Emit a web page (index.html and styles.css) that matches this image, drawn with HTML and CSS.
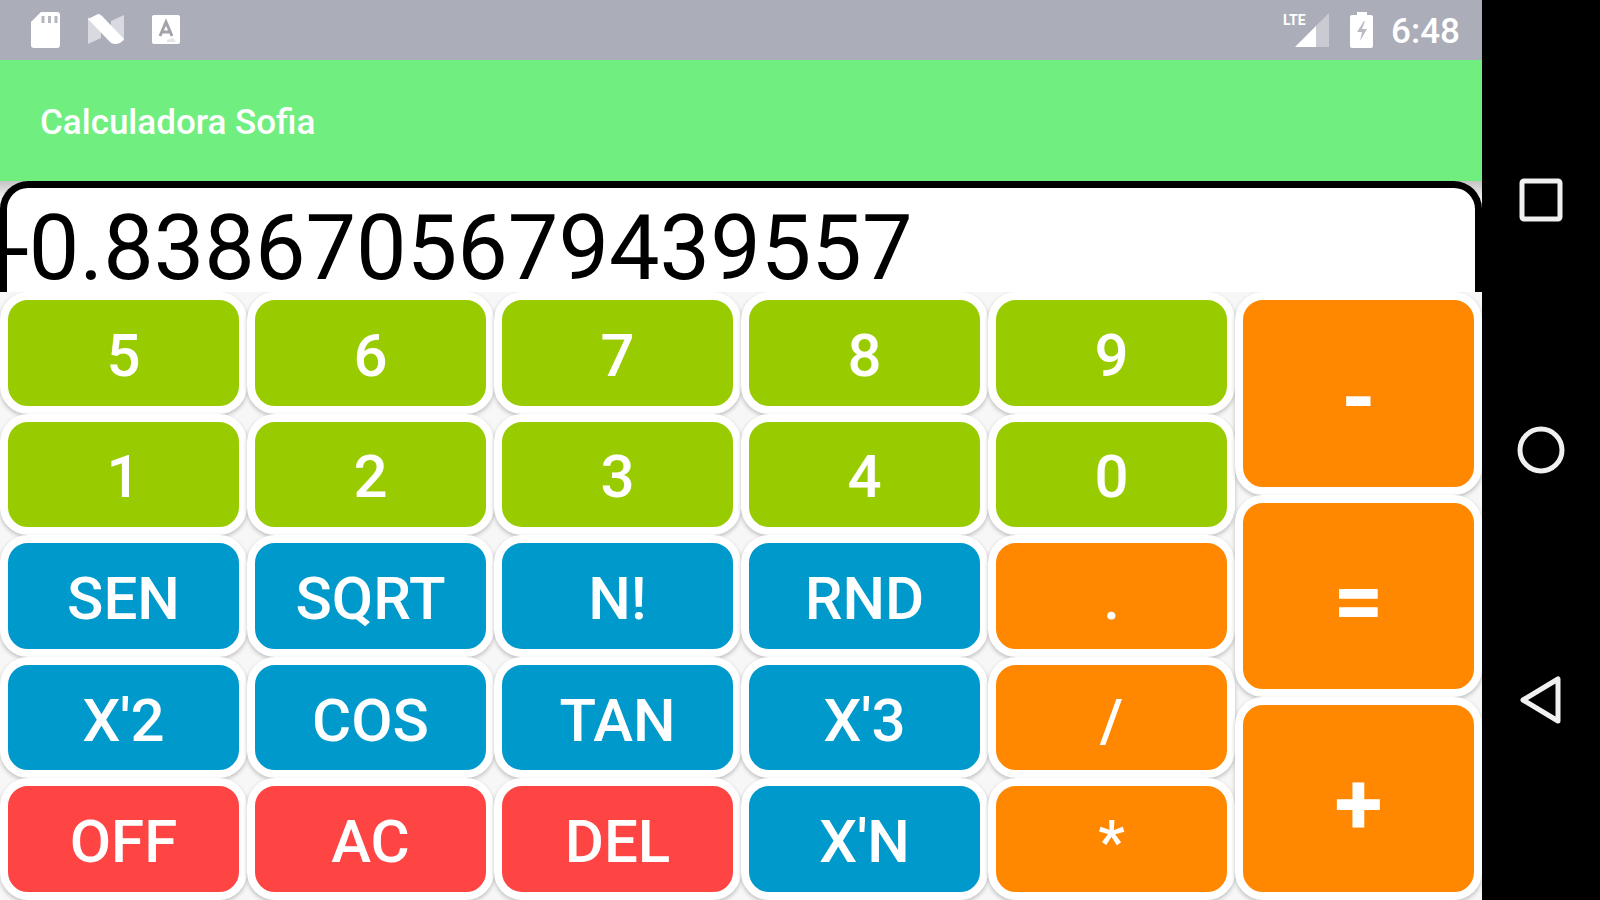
FILE: index.html
```html
<!DOCTYPE html>
<html lang="es">
<head>
<meta charset="utf-8">
<meta name="viewport" content="width=device-width, initial-scale=1">
<title>Calculadora Sofia</title>
<link rel="stylesheet" href="styles.css">
</head>
<body>
<div class="device">
  <div class="app">
    <div class="status">
      <div class="status-left">
        <svg class="status-icon" viewBox="0 0 36 36" aria-hidden="true">
          <path d="M13 0h16q3 0 3 3v30q0 3-3 3H6q-3 0-3-3V10z" fill="#fff"/>
          <path d="M15 4v7M21.500 4v7M28 4v7" stroke="#b5b6c0" stroke-width="3"/>
        </svg>
        <svg class="status-icon" viewBox="0 0 36 36" aria-hidden="true">
          <path d="M0 5l13 14v7L0 32zM36 3v26L23 17V9z" fill="#d9dae1"/>
          <path d="M0 7l10-5q2 0 4 2l22 23q-3 5-9 5-3 0-5-2z" fill="#fff"/>
        </svg>
        <svg class="status-icon" viewBox="0 0 36 36" aria-hidden="true">
          <rect x="4" y="3" width="28" height="29" rx="2" fill="#fff"/>
          <path d="M12 24l6-14 6 14M14 20h8" fill="none" stroke="#a3a4a9" stroke-width="3"/>
          <path d="M19 28l6-2 3 4h-9z" fill="#e4e4e8"/>
        </svg>
      </div>
      <div class="status-right">
        <div class="signal">
          <span class="network">LTE</span>
          <svg class="signal-icon" viewBox="0 0 34 34" aria-hidden="true">
            <path d="M34 0v34H20V14z" fill="#c9cad2"/>
            <path d="M21 13v21H0z" fill="#fff"/>
          </svg>
        </div>
        <svg class="battery" viewBox="0 0 24 36" aria-hidden="true">
          <path d="M7 0h10v3h4q2 0 2 2v29q0 2-2 2H2q-2 0-2-2V5q0-2 2-2h5z" fill="#fff"/>
          <path d="M14 9L7 20h5l-2 9 7-12h-5l3-8z" fill="#b9bac2"/>
        </svg>
        <time class="clock">6:48</time>
      </div>
    </div>
    <header class="toolbar"><h1 class="title">Calculadora Sofia</h1></header>
    <main class="calculator">
      <div class="display">
        <input class="result" type="text" aria-label="Resultado" value="-0.8386705679439557" readonly>
      </div>
      <div class="pad">
        <div class="keys">
          <button class="key digit">5</button>
          <button class="key digit">6</button>
          <button class="key digit">7</button>
          <button class="key digit">8</button>
          <button class="key digit">9</button>
          <button class="key digit">1</button>
          <button class="key digit">2</button>
          <button class="key digit">3</button>
          <button class="key digit">4</button>
          <button class="key digit">0</button>
          <button class="key function">SEN</button>
          <button class="key function">SQRT</button>
          <button class="key function">N!</button>
          <button class="key function">RND</button>
          <button class="key operator">.</button>
          <button class="key function">X'2</button>
          <button class="key function">COS</button>
          <button class="key function">TAN</button>
          <button class="key function">X'3</button>
          <button class="key operator">/</button>
          <button class="key control">OFF</button>
          <button class="key control">AC</button>
          <button class="key control">DEL</button>
          <button class="key function">X'N</button>
          <button class="key operator">*</button>
        </div>
        <div class="side">
          <button class="key operator large">-</button>
          <button class="key operator large">=</button>
          <button class="key operator large">+</button>
        </div>
      </div>
    </main>
  </div>
  <nav class="navbar" aria-label="Sistema">
    <button class="nav-button" aria-label="Recientes">
      <svg class="nav-icon" viewBox="0 0 48 48"><rect x="5" y="5" width="38" height="38" rx="2"/></svg>
    </button>
    <button class="nav-button" aria-label="Inicio">
      <svg class="nav-icon" viewBox="0 0 48 48"><circle cx="24" cy="24" r="21"/></svg>
    </button>
    <button class="nav-button" aria-label="Atrás">
      <svg class="nav-icon" viewBox="0 0 48 48"><path class="back" d="M41 3v42L6 24z"/></svg>
    </button>
  </nav>
</div>
</body>
</html>
```
FILE: styles.css
```css
* {
  box-sizing: border-box;
}

body {
  margin: 0;
  font-family: Roboto, "Liberation Sans", sans-serif;
  background: #000;
}

.device {
  display: flex;
  height: 100vh;
}

.app {
  flex: 1;
  min-width: 0;
  display: flex;
  flex-direction: column;
  background: #f7f7f7;
}

.status {
  display: flex;
  justify-content: space-between;
  align-items: center;
  height: 60px;
  padding: 0 22px 0 28px;
  background: #abadb9;
  color: #fff;
}

.status-left {
  display: flex;
  gap: 24px;
}

.status-icon {
  width: 36px;
  height: 36px;
}

.status-right {
  display: flex;
  align-items: center;
}

.signal {
  position: relative;
  padding-left: 12px;
  margin-right: 21px;
}

.network {
  position: absolute;
  top: 0;
  left: 0;
  font-size: 14px;
  line-height: 14px;
  font-weight: 700;
}

.signal-icon {
  display: block;
  width: 34px;
  height: 34px;
}

.battery {
  width: 24px;
  height: 36px;
  margin-right: 17px;
}

.clock {
  padding-top: 4px;
  font-size: 35px;
  line-height: 40px;
  font-weight: 500;
}

.toolbar {
  display: flex;
  align-items: center;
  height: 121px;
  padding: 4px 40px 0;
  background: #70ef80;
}

.title {
  margin: 0;
  color: #fff;
  font-size: 35px;
  line-height: 40px;
  font-weight: 500;
}

.calculator {
  flex: 1;
  min-height: 0;
  display: flex;
  flex-direction: column;
}

.display {
  height: 111px;
  overflow: hidden;
  background: linear-gradient(#c4c4c4, #f7f7f7 20px);
}

.result {
  display: block;
  width: 100%;
  height: 140px;
  margin: 0;
  padding: 14px 4px 20px;
  border: 0;
  border-radius: 28px;
  outline: 0;
  background: #fff;
  box-shadow: inset 0 0 0 7px #000;
  color: #000;
  font-family: inherit;
  font-size: 90px;
  line-height: 106px;
}

.pad {
  flex: 1;
  min-height: 0;
  display: grid;
  grid-template-columns: 5fr 1fr;
  overflow: hidden;
}

.keys {
  display: grid;
  grid-template-columns: repeat(5, 1fr);
  grid-template-rows: repeat(5, 1fr);
}

.side {
  display: grid;
  grid-template-rows: repeat(3, 1fr);
}

.key {
  min-width: 0;
  min-height: 0;
  margin: 0;
  padding: 6px 0 0;
  border: 8px solid #fff;
  border-radius: 28px;
  box-shadow: 0 2px 4px rgba(0, 0, 0, 0.24);
  color: #fff;
  font-family: inherit;
  font-size: 60px;
  line-height: 70px;
  font-weight: 500;
}

.digit {
  background: #99cc00;
}

.function {
  background: #0099cc;
}

.operator {
  background: #ff8800;
}

.control {
  background: #ff4444;
}

.large {
  padding-top: 10px;
  font-size: 88px;
  line-height: 104px;
  font-weight: 700;
}

.navbar {
  display: flex;
  flex-direction: column;
  width: 118px;
  padding: 75px 0;
  background: #000;
}

.nav-button {
  flex: 1;
  display: flex;
  align-items: center;
  justify-content: center;
  padding: 0;
  border: 0;
  background: none;
}

.nav-icon {
  width: 48px;
  height: 48px;
  fill: none;
  stroke: #f0f0f0;
  stroke-width: 5;
}

.back {
  stroke-linejoin: round;
}
```
